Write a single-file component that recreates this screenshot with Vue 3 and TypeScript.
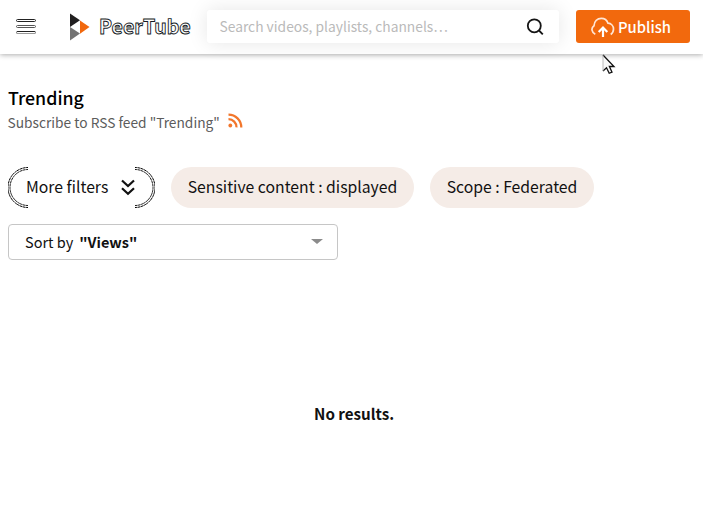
<script setup lang="ts">
import { ref } from 'vue'

const query = ref('')
const filters: string[] = ['Sensitive content : displayed', 'Scope : Federated']
</script>

<template>
  <div class="page">
    <header class="header">
      <button class="menu" aria-label="Menu">
        <i class="bar"></i><i class="bar mid"></i><i class="bar light"></i>
      </button>
      <a class="brand">
        <svg class="logo" width="20" height="28" viewBox="0 0 20 28">
          <path d="M0 .5V14L10 7.300Z" fill="#211f20" />
          <path d="M0 14V27.500L10 20.500Z" fill="#737373" />
          <path d="M10 7.500V20.700L19.500 14Z" fill="#f1680d" />
        </svg>
        <span class="name">PeerTube</span>
      </a>
      <div class="search">
        <input v-model="query" class="field" placeholder="Search videos, playlists, channels…" />
        <svg class="lens" width="18" height="18" viewBox="0 0 18 18" fill="none" stroke="#151515" stroke-width="1.800">
          <circle cx="8.300" cy="7.800" r="6.500" />
          <path d="M13 12.500L16.800 16.300" />
        </svg>
      </div>
      <button class="publish">
        <svg width="24" height="20" viewBox="0 0 24 20" fill="none" stroke="#fff" stroke-width="2">
          <path d="M4.300 17.300C.5 15.500-.2 11 3 8.700 3.300 4.300 6.300 1.300 10.300 1.300c3.400 0 5.700 1.900 6.700 4.900 3.200.2 5.500 2.600 5.500 5.800 0 2.400-1 4.300-2.800 5.500" stroke-width="1.700" stroke="#ffe5d5" />
          <path d="M12 20V10.800M7.700 15L12 10.500l4.300 4.500" stroke-width="2.200" />
        </svg>
        <span class="publish-text">Publish</span>
      </button>
    </header>

    <main class="content">
      <h1 class="title">Trending</h1>
      <div class="feed">
        <span class="feed-text">Subscribe to RSS feed "Trending"</span>
        <svg class="rss" width="15" height="15" viewBox="0 0 15 15" fill="none" stroke="#f2762b" stroke-width="2.200">
          <circle cx="2.300" cy="12.500" r="1.900" fill="#f2762b" stroke="none" />
          <path d="M.5 6.200A8 8 0 0 1 8.500 14.400M.5 1.600A12.800 12.800 0 0 1 13.300 14.400" />
        </svg>
      </div>

      <div class="filters">
        <button class="more">
          <svg class="ring" width="147" height="41" viewBox="0 0 147 41" fill="none" stroke="#000">
            <path d="M20 .5A20 20 0 0 0 20 40.500M127 .5A20 20 0 0 1 127 40.500" stroke-dasharray="2.600 .4" />
            <path d="M20 2.500A18 18 0 0 0 20 38.500M127 2.500A18 18 0 0 1 127 38.500" stroke-dasharray="2.600 .4" stroke-width=".9" />
          </svg>
          <span class="more-text">More filters</span>
          <svg class="chevrons" width="14" height="17" viewBox="0 0 14 17" fill="none" stroke="#111" stroke-width="2.200">
            <path d="M1 1.500L7 7l6-5.500M1 9.200l6 5.500 6-5.500" />
          </svg>
        </button>
        <span v-for="(f, i) in filters" :key="f" class="pill" :class="{ scope: i === 1 }">{{ f }}</span>
      </div>

      <div class="sort">
        <span class="sort-label">Sort by</span><b class="sort-value">"Views"</b>
        <i class="caret"></i>
      </div>

      <p class="empty">No results.</p>
    </main>

    <svg class="cursor" width="14" height="21" viewBox="0 0 14 21">
      <path d="M1 1V17L4.500 13.800L7.200 19.300L10 18.200L7.400 12.500H12Z" fill="#f8f8f8" />
      <path d="M1 1L12 12.500H7.400L10 18.200L7.200 19.300L4.500 13.800L1 17" fill="none" stroke="#111" stroke-width="1.300" />
      <path d="M1 1V17" stroke="#aaa" stroke-width=".8" />
    </svg>
  </div>
</template>

<style>
body { background: #fff; overflow: hidden; }
</style>

<style scoped>
.page { height: 517px; overflow: hidden; box-sizing: border-box; font-family: "Noto Sans CJK SC", "Noto Sans", sans-serif; font-size: 15.750px; color: #111; white-space: nowrap; }
.page *, .page *::before { box-sizing: border-box; }
button { font: inherit; color: inherit; border: 0; background: none; padding: 0; }
.header { height: 54px; padding-bottom: 1px; display: flex; align-items: center; background: #fff; box-shadow: 0 1px 5px rgba(0, 0, 0, .32); position: relative; }
.menu { width: 20px; margin-left: 16px; display: flex; flex-direction: column; gap: 3px; }
.bar { display: block; height: 3px; border: 1px solid #222; border-radius: 1.500px; background: #fff; }
.mid { border-color: #555; }
.light { border-color: #222 #888 #999; }
.brand { display: flex; align-items: center; width: 137px; margin-left: 34px; }
.logo { flex: none; }
.name { margin-left: 9px; padding-bottom: 1px; font-size: 19.600px; line-height: 28px; font-weight: 700; color: #fff; -webkit-text-stroke: .9px #141a24; }
.search { width: 352px; height: 33px; flex: none; border-radius: 3px; display: flex; align-items: center; padding: 0 15px 0 12.500px; background: #fff; box-shadow: 0 0 20px rgba(0, 0, 0, .1); }
.field { flex: 1; min-width: 0; height: 33px; border: 0; outline: 0; padding: 0 0 2px; background: transparent; font: inherit; font-size: 13.800px; }
.field::placeholder { color: #bababa; opacity: 1; }
.publish { width: 114px; height: 33px; flex: none; margin-left: 17px; border-radius: 3px; background: #f2690d; color: #fff; display: flex; align-items: center; padding-left: 15px; gap: 3px; font-size: 14.800px; font-weight: 500; }
.publish-text { padding-bottom: 1px; }
.content { padding: 33px 8px 0; }
.title { margin: 0; font-size: 17.800px; line-height: 20px; font-weight: 500; color: #000; }
.feed { height: 25px; margin-top: 2px; display: flex; align-items: center; gap: 8px; color: #5c5c5c; font-size: 13.750px; }
.feed-text { margin-left: -.5px; }
.rss { position: relative; top: -1px; }
.filters { display: flex; gap: 16px; margin-top: 33px; }
.more { position: relative; width: 147px; height: 41px; display: flex; align-items: center; padding: 0 20px 0 18px; justify-content: space-between; line-height: 39px; }
.more-text { margin-top: -2px; }
.ring { position: absolute; left: 0; top: 0; }
.pill { width: 243px; height: 41px; border-radius: 21px; background: #f5ece7; line-height: 39px; text-align: center; }
.pill.scope { width: 164px; }
.sort { width: 330px; height: 36px; margin-top: 16px; border: 1px solid #c6c6c6; border-radius: 4px; display: flex; align-items: center; padding: 0 14px 1px 16px; font-size: 14.500px; }
.sort-value { margin-left: 6px; }
.caret { margin-left: auto; border: 6px solid transparent; border-top: 5px solid #8b8b8b; border-bottom: 0; }
.empty { margin: 141px 0 0 306px; line-height: 24px; font-size: 15.200px; font-weight: 700; }
.cursor { position: absolute; left: 602px; top: 54px; }
</style>
